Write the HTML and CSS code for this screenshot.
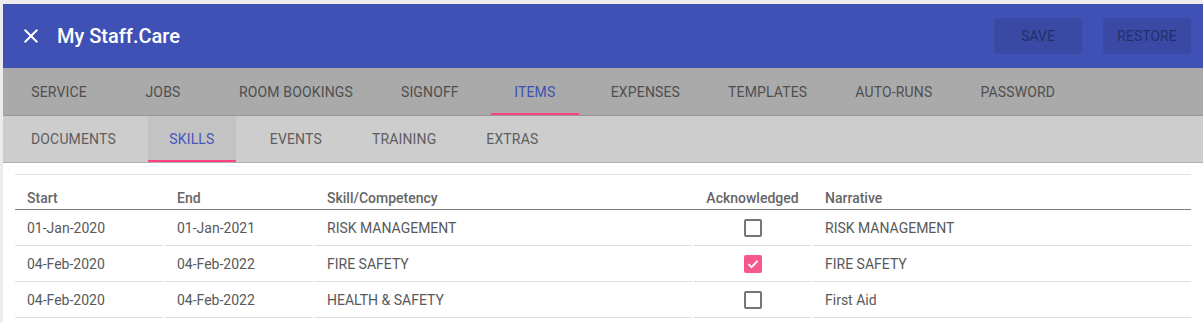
FILE: index.html
```html
<!DOCTYPE html>
<html lang="en">
<head>
    <meta charset="UTF-8">
    <meta name="viewport" content="width=device-width, initial-scale=1.0">
    <title>My Staff.Care</title>
    <link rel="stylesheet" href="styles.css">
</head>
<body>
    <div class="card">
        <header class="toolbar">
            <svg class="close-icon" width="24" height="24" viewBox="0 0 24 24">
                <path d="M19 6.41L17.59 5 12 10.59 6.41 5 5 6.41 10.59 12 5 17.59 6.41 19 12 13.41 17.59 19 19 17.59 13.41 12z"/>
            </svg>
            <h1 class="title">My Staff.Care</h1>
            <div class="spacer"></div>
            <button class="tool-btn" disabled>SAVE</button>
            <button class="tool-btn" disabled>RESTORE</button>
        </header>

        <nav class="tabs tabs-main">
            <a class="tab">SERVICE</a>
            <a class="tab">JOBS</a>
            <a class="tab">ROOM BOOKINGS</a>
            <a class="tab">SIGNOFF</a>
            <a class="tab active">ITEMS</a>
            <a class="tab">EXPENSES</a>
            <a class="tab">TEMPLATES</a>
            <a class="tab">AUTO-RUNS</a>
            <a class="tab">PASSWORD</a>
        </nav>

        <nav class="tabs tabs-sub">
            <a class="tab">DOCUMENTS</a>
            <a class="tab active">SKILLS</a>
            <a class="tab">EVENTS</a>
            <a class="tab">TRAINING</a>
            <a class="tab">EXTRAS</a>
        </nav>

        <div class="content">
            <div class="divider"></div>
            <div class="grid-row head">
                <div class="cell">Start</div>
                <div class="cell">End</div>
                <div class="cell">Skill/Competency</div>
                <div class="cell center">Acknowledged</div>
                <div class="cell">Narrative</div>
            </div>
            <div class="grid-row">
                <div class="cell">01-Jan-2020</div>
                <div class="cell">01-Jan-2021</div>
                <div class="cell">RISK MANAGEMENT</div>
                <div class="cell center"><span class="checkbox"></span></div>
                <div class="cell">RISK MANAGEMENT</div>
            </div>
            <div class="grid-row">
                <div class="cell">04-Feb-2020</div>
                <div class="cell">04-Feb-2022</div>
                <div class="cell">FIRE SAFETY</div>
                <div class="cell center">
                    <span class="checkbox checked">
                        <svg width="14" height="14" viewBox="0 0 14 14"><path d="M2.5 7.2l3 3 6-6.2"/></svg>
                    </span>
                </div>
                <div class="cell">FIRE SAFETY</div>
            </div>
            <div class="grid-row">
                <div class="cell">04-Feb-2020</div>
                <div class="cell">04-Feb-2022</div>
                <div class="cell">HEALTH &amp; SAFETY</div>
                <div class="cell center"><span class="checkbox"></span></div>
                <div class="cell">First Aid</div>
            </div>
        </div>
    </div>
</body>
</html>
```

FILE: styles.css
```css
body {
    margin: 0;
    padding: 4px 0 0 3px;
    background-color: #ececec;
    font-family: Roboto, "Liberation Sans", Arial, sans-serif;
    font-size: 14px;
    overflow: hidden;
}
.card {
    width: 1200px;
    background-color: #FFFFFF;
    min-height: 400px;
}

/* top bar */
.toolbar {
    display: flex;
    align-items: center;
    height: 64px;
    padding: 0 12px 0 16px;
    background-color: #3f51b5;
    color: #FFFFFF;
}
.close-icon {
    fill: #FFFFFF;
    flex: none;
}
.title {
    margin: 0 0 0 14px;
    font-size: 20px;
    font-weight: 500;
}
.spacer {
    flex: 1;
}
.tool-btn {
    width: 88px;
    height: 36px;
    margin-left: 21px;
    border: none;
    border-radius: 3px;
    background-color: rgba(0, 0, 0, 0.09);
    color: rgba(0, 0, 0, 0.38);
    font-family: inherit;
    font-size: 14px;
    font-weight: 400;
}

/* tabs */
.tabs {
    display: flex;
    gap: 16px;
    padding-left: 12px;
}
.tab {
    display: flex;
    align-items: center;
    justify-content: center;
    min-width: 88px;
    padding: 0 16px;
    box-sizing: border-box;
    letter-spacing: 0.15px;
    text-transform: uppercase;
    cursor: pointer;
}
.tab.active {
    color: #3f51b5;
    box-shadow: inset 0 -2px 0 #ff4081;
}
.tabs-main {
    height: 47px;
    background-color: #aaaaaa;
    border-bottom: 1px solid #979797;
}
.tabs-main .tab {
    color: #4f4f4f;
}
.tabs-main .tab.active {
    color: #3f51b5;
}
.tabs-sub {
    height: 46px;
    background-color: #cdcdcd;
    border-bottom: 1px solid #b0b0b0;
}
.tabs-sub .tab {
    color: #5e5e5e;
}
.tabs-sub .tab.active {
    color: #4656bd;
    background-color: #c3c3c3;
}

/* skills list */
.content {
    padding: 0 12px;
}
.divider {
    margin-top: 11px;
    border-top: 1px solid #e3e3e3;
}
.grid-row {
    display: grid;
    grid-template-columns: 148px 148px 377px 117px 1fr;
    column-gap: 2px;
    color: #595959;
}
.cell {
    display: flex;
    align-items: center;
    height: 35px;
    padding: 0 12px;
    border-bottom: 1px solid #dedede;
}
.cell.center {
    justify-content: center;
}
.grid-row.head {
    border-bottom: 1px solid #7f7f7f;
    color: #666666;
    font-weight: 500;
}
.grid-row.head .cell {
    height: 34px;
    padding-top: 13px;
    box-sizing: border-box;
    align-items: flex-start;
    line-height: 20px;
    border-bottom: none;
}
.checkbox {
    display: flex;
    align-items: center;
    justify-content: center;
    width: 18px;
    height: 18px;
    box-sizing: border-box;
    border: 2px solid #757575;
    border-radius: 2px;
}
.checkbox.checked {
    border-color: #f5588c;
    background-color: #f5588c;
}
.checkbox svg path {
    fill: none;
    stroke: #FFFFFF;
    stroke-width: 1.8;
}
```
